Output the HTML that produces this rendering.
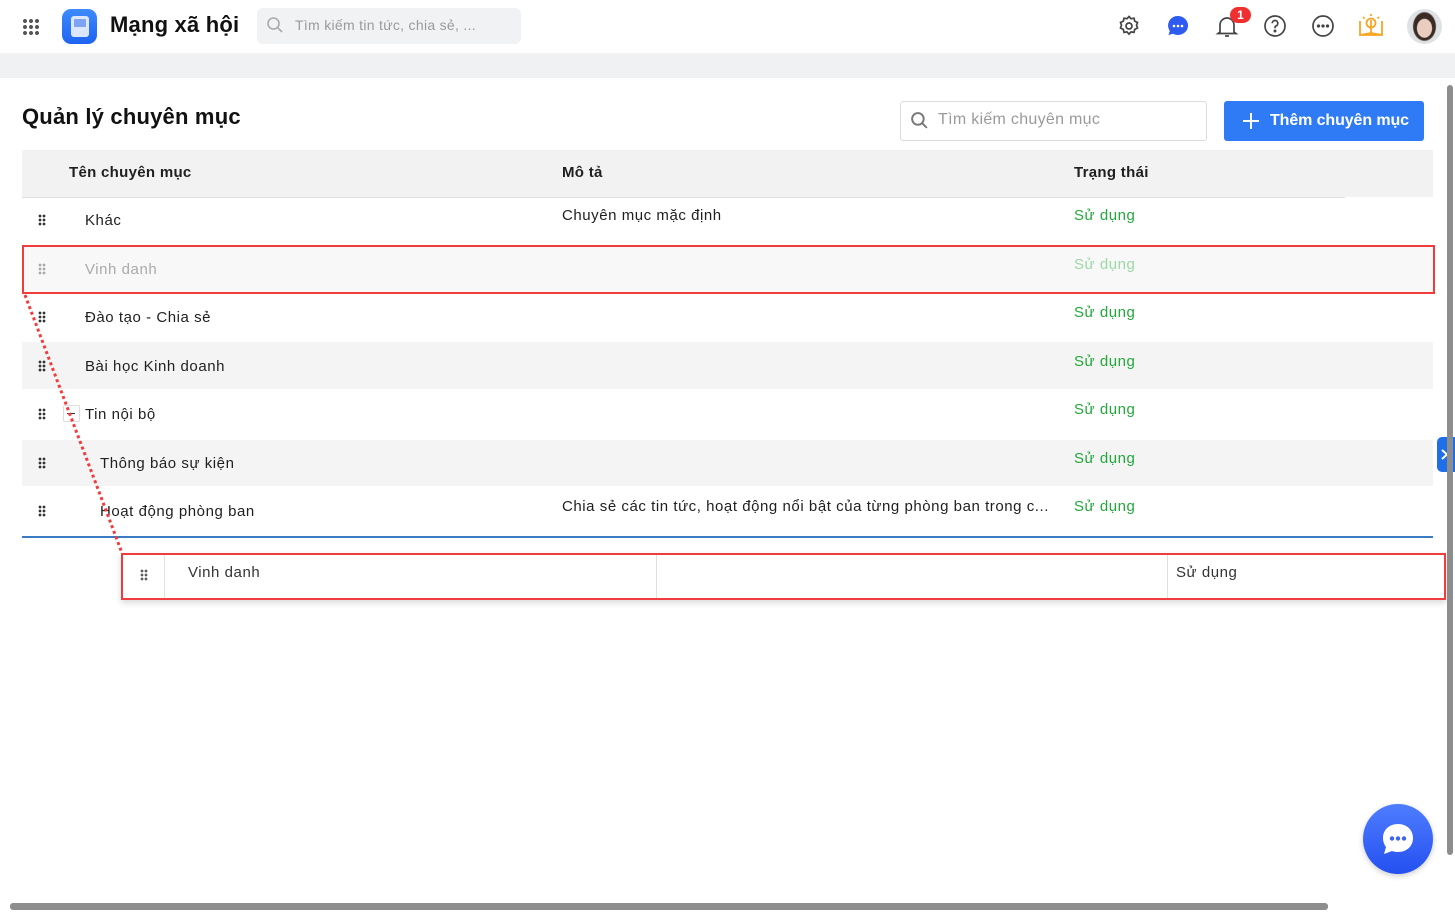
<!DOCTYPE html>
<html><head><meta charset="utf-8"><style>
*{box-sizing:border-box;margin:0;padding:0}
body{width:1455px;height:918px;overflow:hidden;background:#fff;font-family:"Liberation Sans",sans-serif;color:#1f1f1f;position:relative}
.a{position:absolute}
.t{font-size:15px;white-space:nowrap;letter-spacing:.55px;margin-top:1px}
.g{color:#22a83a;font-size:15px;letter-spacing:.55px;margin-top:1px}
.dots{position:absolute;width:8px;height:12px;background:radial-gradient(circle,#333 1.2px,transparent 1.6px) 0 0/4px 4px}
</style></head><body>
<!-- header -->
<div class="a" style="left:22px;top:18px;width:18px;height:18px;background:radial-gradient(circle,#555 1.8px,transparent 2.2px) 0 0/6px 6px"></div>
<div class="a" style="left:62px;top:9px;width:35px;height:35px;border-radius:9px;background:linear-gradient(#3d8bff,#1e63f0)"></div>
<div class="a" style="left:71px;top:16px;width:18px;height:21px;border-radius:3px;background:#dde6ff"></div>
<div class="a" style="left:74px;top:19px;width:12px;height:8px;background:#7fa3f5"></div>
<div class="a" style="left:110px;top:12px;font-size:22px;font-weight:bold;color:#111;letter-spacing:.2px">Mạng xã hội</div>
<div class="a" style="left:257px;top:8px;width:264px;height:36px;border-radius:6px;background:#f1f2f4"></div>
<svg class="a" style="left:266px;top:16px" width="18" height="18" viewBox="0 0 18 18"><circle cx="7.5" cy="7.5" r="5.5" fill="none" stroke="#aaa" stroke-width="1.6"/><path d="M11.5 11.5l4.5 4.5" stroke="#aaa" stroke-width="1.6"/></svg>
<div class="a" style="left:295px;top:17px;color:#9a9a9a;font-size:14px;letter-spacing:.3px;white-space:nowrap">Tìm kiếm tin tức, chia sẻ, ...</div>
<svg class="a" style="left:1117px;top:14px" width="24" height="24" viewBox="0 0 24 24" fill="none" stroke="#444" stroke-width="1.7"><circle cx="12" cy="12" r="3"/><path d="M12 2.5l2 2.2 3-.5.7 3 2.8 1.3-1 2.8 1 2.8-2.8 1.3-.7 3-3-.5-2 2.2-2-2.2-3 .5-.7-3-2.8-1.3 1-2.8-1-2.8 2.8-1.3.7-3 3 .5z"/></svg>
<svg class="a" style="left:1166px;top:14px" width="24" height="24" viewBox="0 0 24 24"><path d="M12 2a10 9.5 0 1 1-5 17.7L2.5 21l1.3-4A9.5 9.5 0 0 1 12 2z" fill="#2f5cf0"/><circle cx="8" cy="12" r="1.3" fill="#fff"/><circle cx="12" cy="12" r="1.3" fill="#fff"/><circle cx="16" cy="12" r="1.3" fill="#fff"/></svg>
<svg class="a" style="left:1214px;top:13px" width="26" height="26" viewBox="0 0 26 26" fill="none" stroke="#444" stroke-width="1.7"><path d="M6 19V12a7 7 0 0 1 14 0v7l2 1.5H4z"/><path d="M11 23h4"/></svg>
<div class="a" style="left:1230px;top:7px;width:21px;height:16px;border-radius:8px;background:#f03030;color:#fff;font-size:12px;font-weight:bold;text-align:center;line-height:16px">1</div>
<svg class="a" style="left:1263px;top:14px" width="24" height="24" viewBox="0 0 24 24" fill="none" stroke="#444" stroke-width="1.7"><circle cx="12" cy="12" r="10"/><path d="M9.2 9.3a2.8 2.8 0 1 1 3.6 2.7c-.6.3-.8.8-.8 1.5v.8"/><circle cx="12" cy="17" r=".6" fill="#444"/></svg>
<svg class="a" style="left:1311px;top:14px" width="24" height="24" viewBox="0 0 24 24" fill="none" stroke="#444" stroke-width="1.7"><circle cx="12" cy="12" r="10"/><circle cx="7.5" cy="12" r=".8" fill="#444"/><circle cx="12" cy="12" r=".8" fill="#444"/><circle cx="16.5" cy="12" r=".8" fill="#444"/></svg>
<svg class="a" style="left:1358px;top:12px" width="26" height="26" viewBox="0 0 26 26" fill="none" stroke="#f9a524" stroke-width="1.8"><path d="M2 9v14h22V9M2 23l11-2 11 2"/><path d="M13 21V8"/><circle cx="13" cy="11" r="4.5"/><path d="M13 2v2M5 5l1.5 1.5M21 5l-1.5 1.5"/></svg>
<div class="a" style="left:1407px;top:9px;width:35px;height:35px;border-radius:50%;background:radial-gradient(ellipse 8px 10px at 50% 55%,#e9cdbf 90%,transparent 100%),radial-gradient(ellipse 12px 15px at 50% 50%,#3a2b25 90%,#dfe2e4 100%)"></div>
<div class="a" style="left:0;top:53px;width:1455px;height:25px;background:#f0f1f3"></div>
<!-- title bar -->
<div class="a" style="left:22px;top:104px;font-size:22px;font-weight:bold;color:#111;letter-spacing:.2px">Quản lý chuyên mục</div>
<div class="a" style="left:900px;top:101px;width:307px;height:40px;border:1px solid #dcdcdc;border-radius:3px"></div>
<svg class="a" style="left:910px;top:111px" width="19" height="19" viewBox="0 0 18 18"><circle cx="7.5" cy="7.5" r="5.5" fill="none" stroke="#777" stroke-width="1.8"/><path d="M11.5 11.5l4.5 4.5" stroke="#777" stroke-width="1.8"/></svg>
<div class="a" style="left:938px;top:111px;color:#9a9a9a;font-size:16px;letter-spacing:.3px;white-space:nowrap">Tìm kiếm chuyên mục</div>
<div class="a" style="left:1224px;top:101px;width:200px;height:40px;border-radius:3px;background:#2f7bf5;color:#fff;font-size:16px;font-weight:bold;line-height:40px;padding-left:46px;letter-spacing:-.1px">Thêm chuyên mục</div>
<svg class="a" style="left:1242px;top:112px" width="18" height="18"><path d="M9 1v16M1 9h16" stroke="#fff" stroke-width="2"/></svg>
<!-- table header -->
<div class="a" style="left:22px;top:150px;width:1411px;height:47px;background:#f2f2f2"></div>
<div class="a" style="left:22px;top:197px;width:1323px;height:1px;background:#e0e0e0"></div>
<div class="a t" style="left:69px;top:163px;font-weight:bold;letter-spacing:.3px">Tên chuyên mục</div>
<div class="a t" style="left:562px;top:163px;font-weight:bold;letter-spacing:.3px">Mô tả</div>
<div class="a t" style="left:1074px;top:163px;font-weight:bold;letter-spacing:.3px">Trạng thái</div>
<!-- rows -->
<div class="a" style="left:22px;top:245px;width:1413px;height:49px;background:#f8f8f8;border:2px solid #f03c3c"></div>
<div class="a" style="left:22px;top:342px;width:1411px;height:47px;background:#f4f4f4"></div>
<div class="a" style="left:22px;top:440px;width:1411px;height:46px;background:#f4f4f4"></div>
<div class="a" style="left:22px;top:536px;width:1411px;height:2px;background:#3b7bc4"></div>

<div class="dots" style="left:38px;top:214px"></div><div class="a t" style="left:85px;top:211px">Khác</div><div class="a t" style="left:562px;top:206px">Chuyên mục mặc định</div><div class="a g" style="left:1074px;top:206px">Sử dụng</div>
<div class="dots" style="left:38px;top:263px;opacity:.4"></div><div class="a t" style="left:85px;top:260px;color:#aaa">Vinh danh</div><div class="a g" style="left:1074px;top:255px;color:#9bd8a6">Sử dụng</div>
<div class="dots" style="left:38px;top:311px"></div><div class="a t" style="left:85px;top:308px">Đào tạo - Chia sẻ</div><div class="a g" style="left:1074px;top:303px">Sử dụng</div>
<div class="dots" style="left:38px;top:360px"></div><div class="a t" style="left:85px;top:357px">Bài học Kinh doanh</div><div class="a g" style="left:1074px;top:352px">Sử dụng</div>
<div class="dots" style="left:38px;top:408px"></div><div class="a" style="left:63px;top:405px;width:17px;height:17px;border:1px solid #ddd;border-radius:2px;background:#fff"></div><div class="a" style="left:67px;top:413px;width:8px;height:1px;background:#333"></div><div class="a t" style="left:85px;top:405px">Tin nội bộ</div><div class="a g" style="left:1074px;top:400px">Sử dụng</div>
<div class="dots" style="left:38px;top:457px"></div><div class="a t" style="left:100px;top:454px">Thông báo sự kiện</div><div class="a g" style="left:1074px;top:449px">Sử dụng</div>
<div class="dots" style="left:38px;top:505px"></div><div class="a t" style="left:100px;top:502px">Hoạt động phòng ban</div><div class="a t" style="left:562px;top:497px">Chia sẻ các tin tức, hoạt động nổi bật của từng phòng ban trong c...</div><div class="a g" style="left:1074px;top:497px">Sử dụng</div>
<!-- dotted line -->
<svg class="a" style="left:0;top:0" width="1455" height="918"><path d="M25 295L122 553" stroke="#f03c3c" stroke-width="3" stroke-dasharray="3 3"/></svg>
<!-- drag row -->
<div class="a" style="left:121px;top:553px;width:1325px;height:47px;background:#fff;border:2px solid #f03c3c;box-shadow:0 3px 6px rgba(0,0,0,.15)"></div>
<div class="a" style="left:164px;top:555px;width:1px;height:43px;background:#e0e0e0"></div>
<div class="a" style="left:656px;top:555px;width:1px;height:43px;background:#e0e0e0"></div>
<div class="a" style="left:1167px;top:555px;width:1px;height:43px;background:#e0e0e0"></div>
<div class="dots" style="left:140px;top:569px;opacity:.8"></div>
<div class="a t" style="left:188px;top:563px;color:#333">Vinh danh</div>
<div class="a t" style="left:1176px;top:563px;color:#333">Sử dụng</div>
<!-- side tab & chat -->
<div class="a" style="left:1437px;top:437px;width:18px;height:35px;border-radius:5px 0 0 5px;background:#1e6fe8"></div>
<svg class="a" style="left:1440px;top:448px" width="10" height="13"><path d="M2 2l5 4.5-5 4.5" stroke="#fff" stroke-width="2" fill="none"/></svg>
<div class="a" style="left:1363px;top:804px;width:70px;height:70px;border-radius:50%;background:linear-gradient(#4f7dff,#2450f0);box-shadow:0 2px 6px rgba(0,0,0,.2)"></div>
<svg class="a" style="left:1377px;top:818px" width="42" height="42" viewBox="0 0 42 42"><path d="M21 6c9 0 15 6 15 14s-6 14-15 14c-2 0-4-.3-6-1L7 36l2-7c-2-2.5-3-5.5-3-9C6 12 12 6 21 6z" fill="#fff"/><circle cx="15" cy="20.5" r="2.2" fill="#3a63f5"/><circle cx="21" cy="20.5" r="2.2" fill="#3a63f5"/><circle cx="27" cy="20.5" r="2.2" fill="#3a63f5"/></svg>
<!-- scrollbars -->
<div class="a" style="left:1447px;top:85px;width:6px;height:770px;border-radius:3px;background:#8d8d8d"></div>
<div class="a" style="left:10px;top:903px;width:1318px;height:7px;border-radius:3px;background:#8d8d8d"></div>
</body></html>
